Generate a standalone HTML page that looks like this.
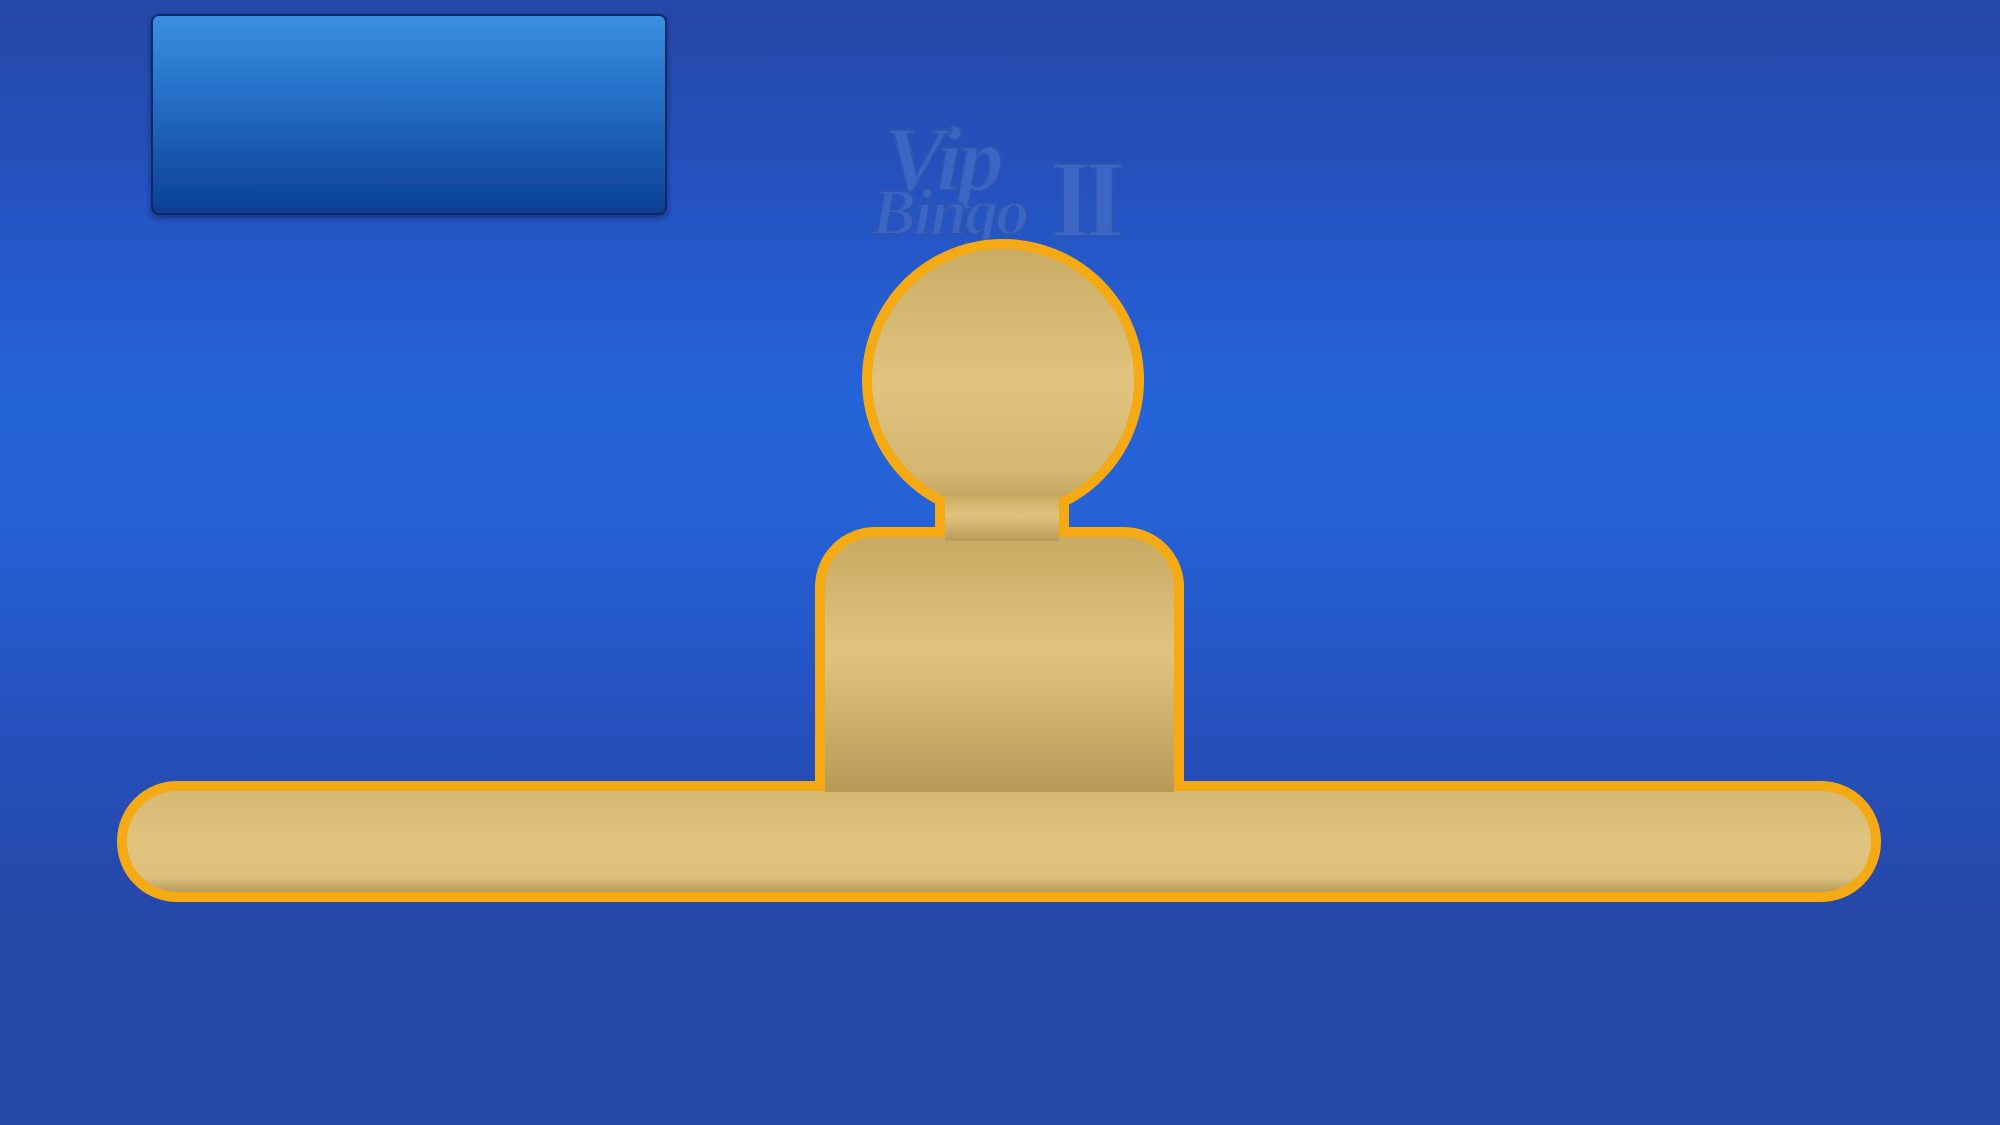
<!DOCTYPE html>
<html><head><meta charset="utf-8"><style>
html,body{margin:0;padding:0;width:2000px;height:1125px;overflow:hidden}
body{background:linear-gradient(to bottom,#2547a7 0%,#2553c2 18%,#2563d9 35%,#2562d6 45%,#2550bd 65%,#2548a7 82%,#2547a6 100%)}
</style></head><body>
<svg width="2000" height="1125" viewBox="0 0 2000 1125" style="position:absolute;left:0;top:0">
<defs>
<linearGradient id="btn" x1="0" y1="0" x2="0" y2="1">
<stop offset="0" stop-color="#3a8fe0"/><stop offset="0.4" stop-color="#2670c9"/><stop offset="1" stop-color="#0b3e92"/></linearGradient>
<linearGradient id="g1" x1="0" y1="0" x2="0" y2="1">
<stop offset="0" stop-color="#c9ac64"/><stop offset="0.5" stop-color="#e0c47e"/><stop offset="0.85" stop-color="#d4b872"/><stop offset="1" stop-color="#b89c5a"/></linearGradient>
<linearGradient id="g2" x1="0" y1="0" x2="0" y2="1">
<stop offset="0" stop-color="#c8aa62"/><stop offset="0.45" stop-color="#e0c47e"/><stop offset="1" stop-color="#b89a58"/></linearGradient>
<linearGradient id="g3" x1="0" y1="0" x2="0" y2="1">
<stop offset="0" stop-color="#d6ba74"/><stop offset="0.5" stop-color="#e0c47e"/><stop offset="0.85" stop-color="#dcc07c"/><stop offset="1" stop-color="#b89c5a"/></linearGradient>
<filter id="sh"><feDropShadow dx="0" dy="3" stdDeviation="3" flood-color="#0a1c50" flood-opacity="0.6"/></filter>
</defs>
<rect x="152" y="15" width="514" height="199" rx="7" fill="url(#btn)" stroke="#0a2a66" stroke-width="2" filter="url(#sh)"/>
<g font-family="Liberation Serif, serif" font-weight="bold" font-style="italic" fill="#3c66c6" stroke="#2e55b0" stroke-width="2">
<text x="884" y="190" font-size="92" letter-spacing="-4">Vip</text>
<text x="872" y="234" font-size="66" letter-spacing="-2">Bingo</text>
<text x="1050" y="236" font-size="110" font-style="normal" letter-spacing="-10">II</text>
</g>
<g fill="none" stroke="#f5aa14" stroke-width="20">
<circle cx="1003" cy="380" r="131"/>
<rect x="945" y="485" width="114" height="50"/>
<path d="M825,800 V587 a50,50 0 0 1 50,-50 H1124 a50,50 0 0 1 50,50 V800"/>
<rect x="127" y="791" width="1744" height="101" rx="50"/>
</g>
<circle cx="1003" cy="380" r="131" fill="url(#g1)"/>
<rect x="127" y="791" width="1744" height="101" rx="50" fill="url(#g3)"/>
<path d="M825,792 V587 a50,50 0 0 1 50,-50 H1124 a50,50 0 0 1 50,50 V792 Z" fill="url(#g2)"/>
<rect x="945" y="495" width="114" height="46" fill="url(#g2)"/>
</svg>
</body></html>
